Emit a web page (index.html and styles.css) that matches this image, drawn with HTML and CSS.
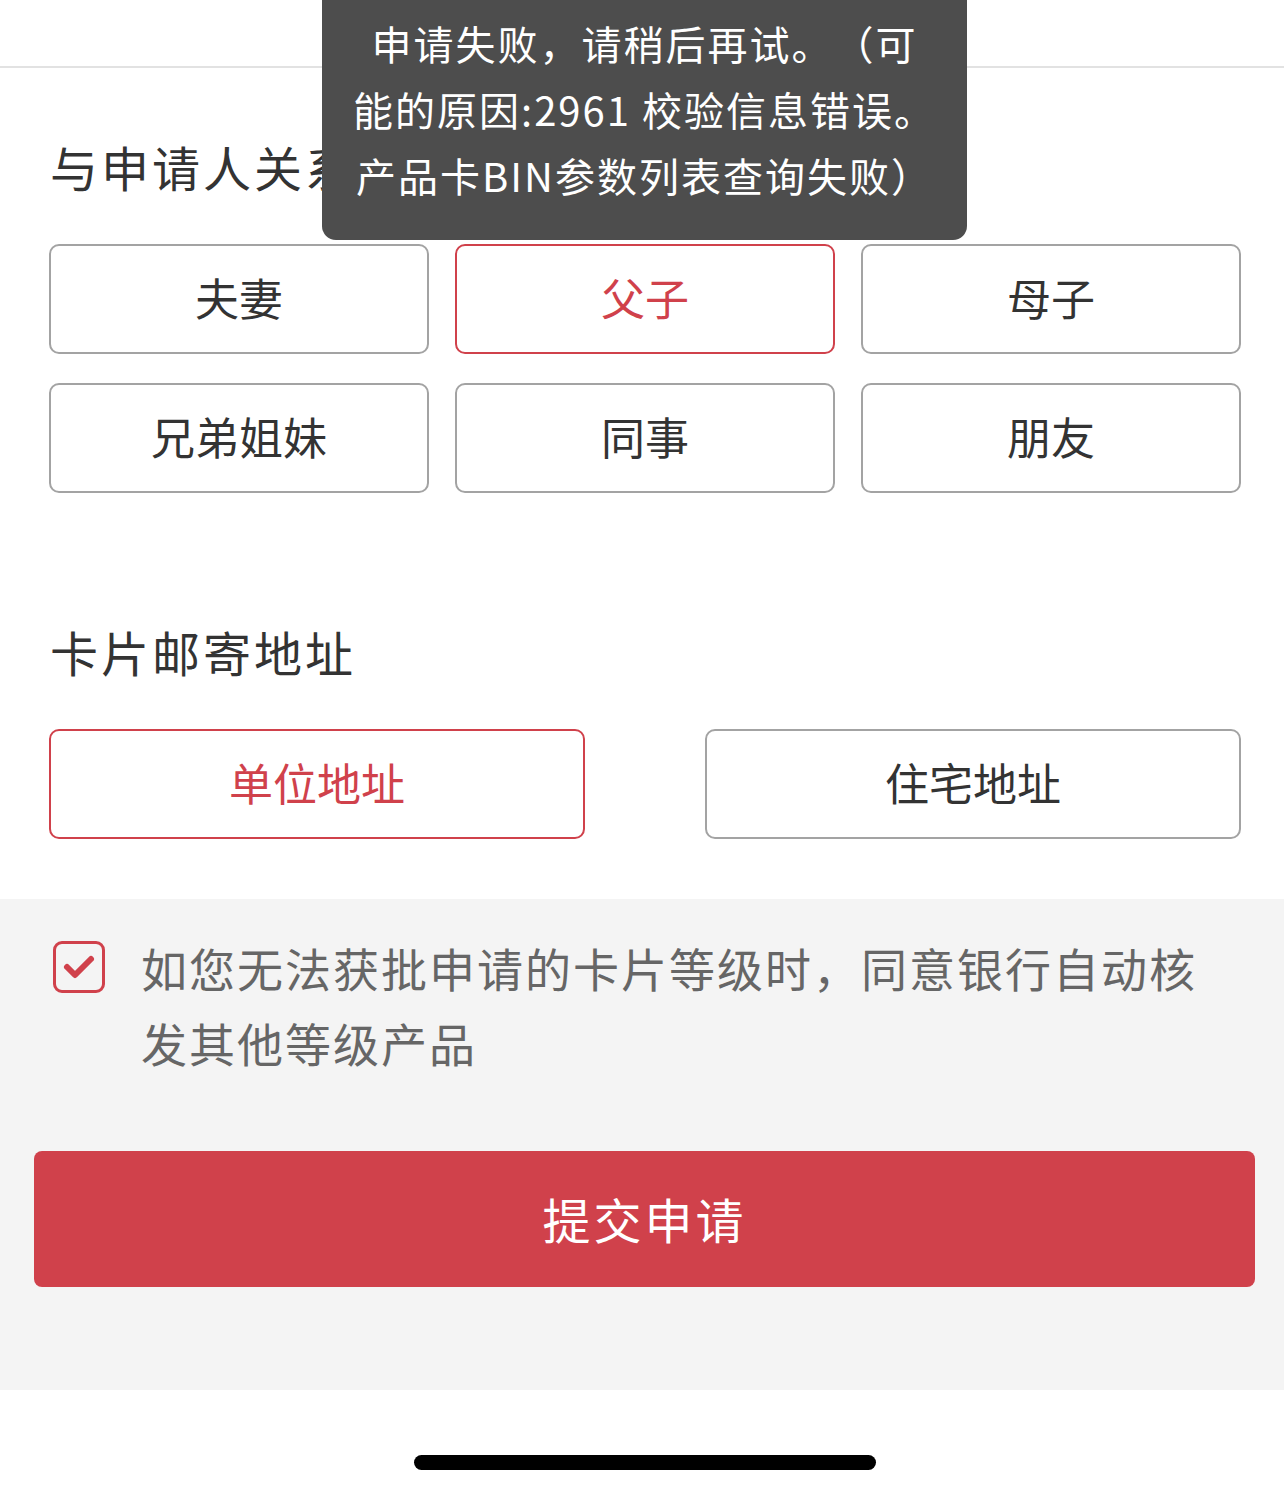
FILE: index.html
```html
<!DOCTYPE html>
<html lang="zh-CN">
<head>
<meta charset="utf-8">
<link rel="stylesheet" href="styles.css">
</head>
<body>
<div class="page">
  <div class="topbar"></div>
  <section class="form">
    <h2 class="title">与申请人关系</h2>
    <div class="grid3">
      <div class="opt">夫妻</div>
      <div class="opt active">父子</div>
      <div class="opt">母子</div>
      <div class="opt">兄弟姐妹</div>
      <div class="opt">同事</div>
      <div class="opt">朋友</div>
    </div>
    <h2 class="title title2">卡片邮寄地址</h2>
    <div class="grid2">
      <div class="opt active">单位地址</div>
      <div class="opt">住宅地址</div>
    </div>
  </section>
  <section class="footer">
    <div class="agree">
      <div class="check">
        <svg width="34" height="28" viewBox="0 0 34 28"><path d="M5 14 L13 22 L29 6" fill="none" stroke="#d0414b" stroke-width="6" stroke-linecap="round" stroke-linejoin="round"/></svg>
      </div>
      <p class="agree-text">如您无法获批申请的卡片等级时，同意银行自动核发其他等级产品</p>
    </div>
    <button class="submit">提交申请</button>
  </section>
  <div class="home"><span class="bar"></span></div>
  <div class="toast">申请失败，请稍后再试。（可<br>能的原因:2961 校验信息错误。<br>产品卡BIN参数列表查询失败）</div>
</div>
</body>
</html>
```
FILE: styles.css
```css
* { box-sizing: border-box; }
html, body { margin: 0; padding: 0; background: #fff; }
body {
  font-family: "PingFang SC", "Noto Sans CJK SC", "Noto Sans", sans-serif;
  width: 1284px;
  text-spacing-trim: space-all;
}
.page { position: relative; width: 1284px; height: 1494px; overflow: hidden; }
.topbar { height: 68px; border-bottom: 2px solid #e2e2e2; }
.form { padding: 68px 43px 60px 49px; }
.title {
  margin: 0;
  font-size: 48px;
  font-weight: 400;
  letter-spacing: 3px;
  line-height: 60px;
  color: #333;
  padding-left: 1px;
}
.title2 { margin-top: 128px; }
.grid3 {
  margin-top: 48px;
  display: grid;
  grid-template-columns: repeat(3, 380px);
  column-gap: 26px;
  row-gap: 29px;
}
.grid2 {
  margin-top: 48px;
  display: grid;
  grid-template-columns: repeat(2, 536px);
  column-gap: 120px;
}
.opt {
  height: 110px;
  border: 2px solid #a3a3a3;
  border-radius: 10px;
  display: flex;
  align-items: center;
  justify-content: center;
  font-size: 44px;
  color: #333;
  padding-bottom: 5px;
}
.opt.active { border-color: #d0414b; color: #d0414b; }
.footer {
  background: #f4f4f4;
  height: 491px;
  padding: 31px 29px 0 34px;
}
.agree { display: flex; align-items: flex-start; padding-left: 19px; }
.check {
  width: 52px;
  height: 52px;
  margin-top: 11px;
  border: 3px solid #d0414b;
  border-radius: 9px;
  display: flex;
  align-items: center;
  justify-content: center;
  flex: none;
}
.agree-text {
  margin: 0 0 0 36px;
  width: 1090px;
  font-size: 46px;
  letter-spacing: 2px;
  line-height: 75px;
  color: #666;
}
.submit {
  display: block;
  margin-top: 71px;
  width: 1221px;
  height: 136px;
  border: none;
  border-radius: 8px;
  background: #d0414b;
  color: #fff;
  font-family: inherit;
  font-size: 48px;
  letter-spacing: 3px;
  padding-bottom: 4px;
}
.home { height: 104px; display: flex; justify-content: center; padding-top: 65px; padding-left: 6px; }
.bar { display: block; width: 462px; height: 15px; border-radius: 8px; background: #000; }
.toast {
  position: absolute;
  top: 0;
  left: 322px;
  width: 645px;
  height: 240px;
  background: #4d4d4d;
  border-radius: 0 0 14px 14px;
  color: #fff;
  font-size: 40px;
  line-height: 66px;
  text-align: center;
  padding-top: 10px;
  letter-spacing: 2px;
}
```
